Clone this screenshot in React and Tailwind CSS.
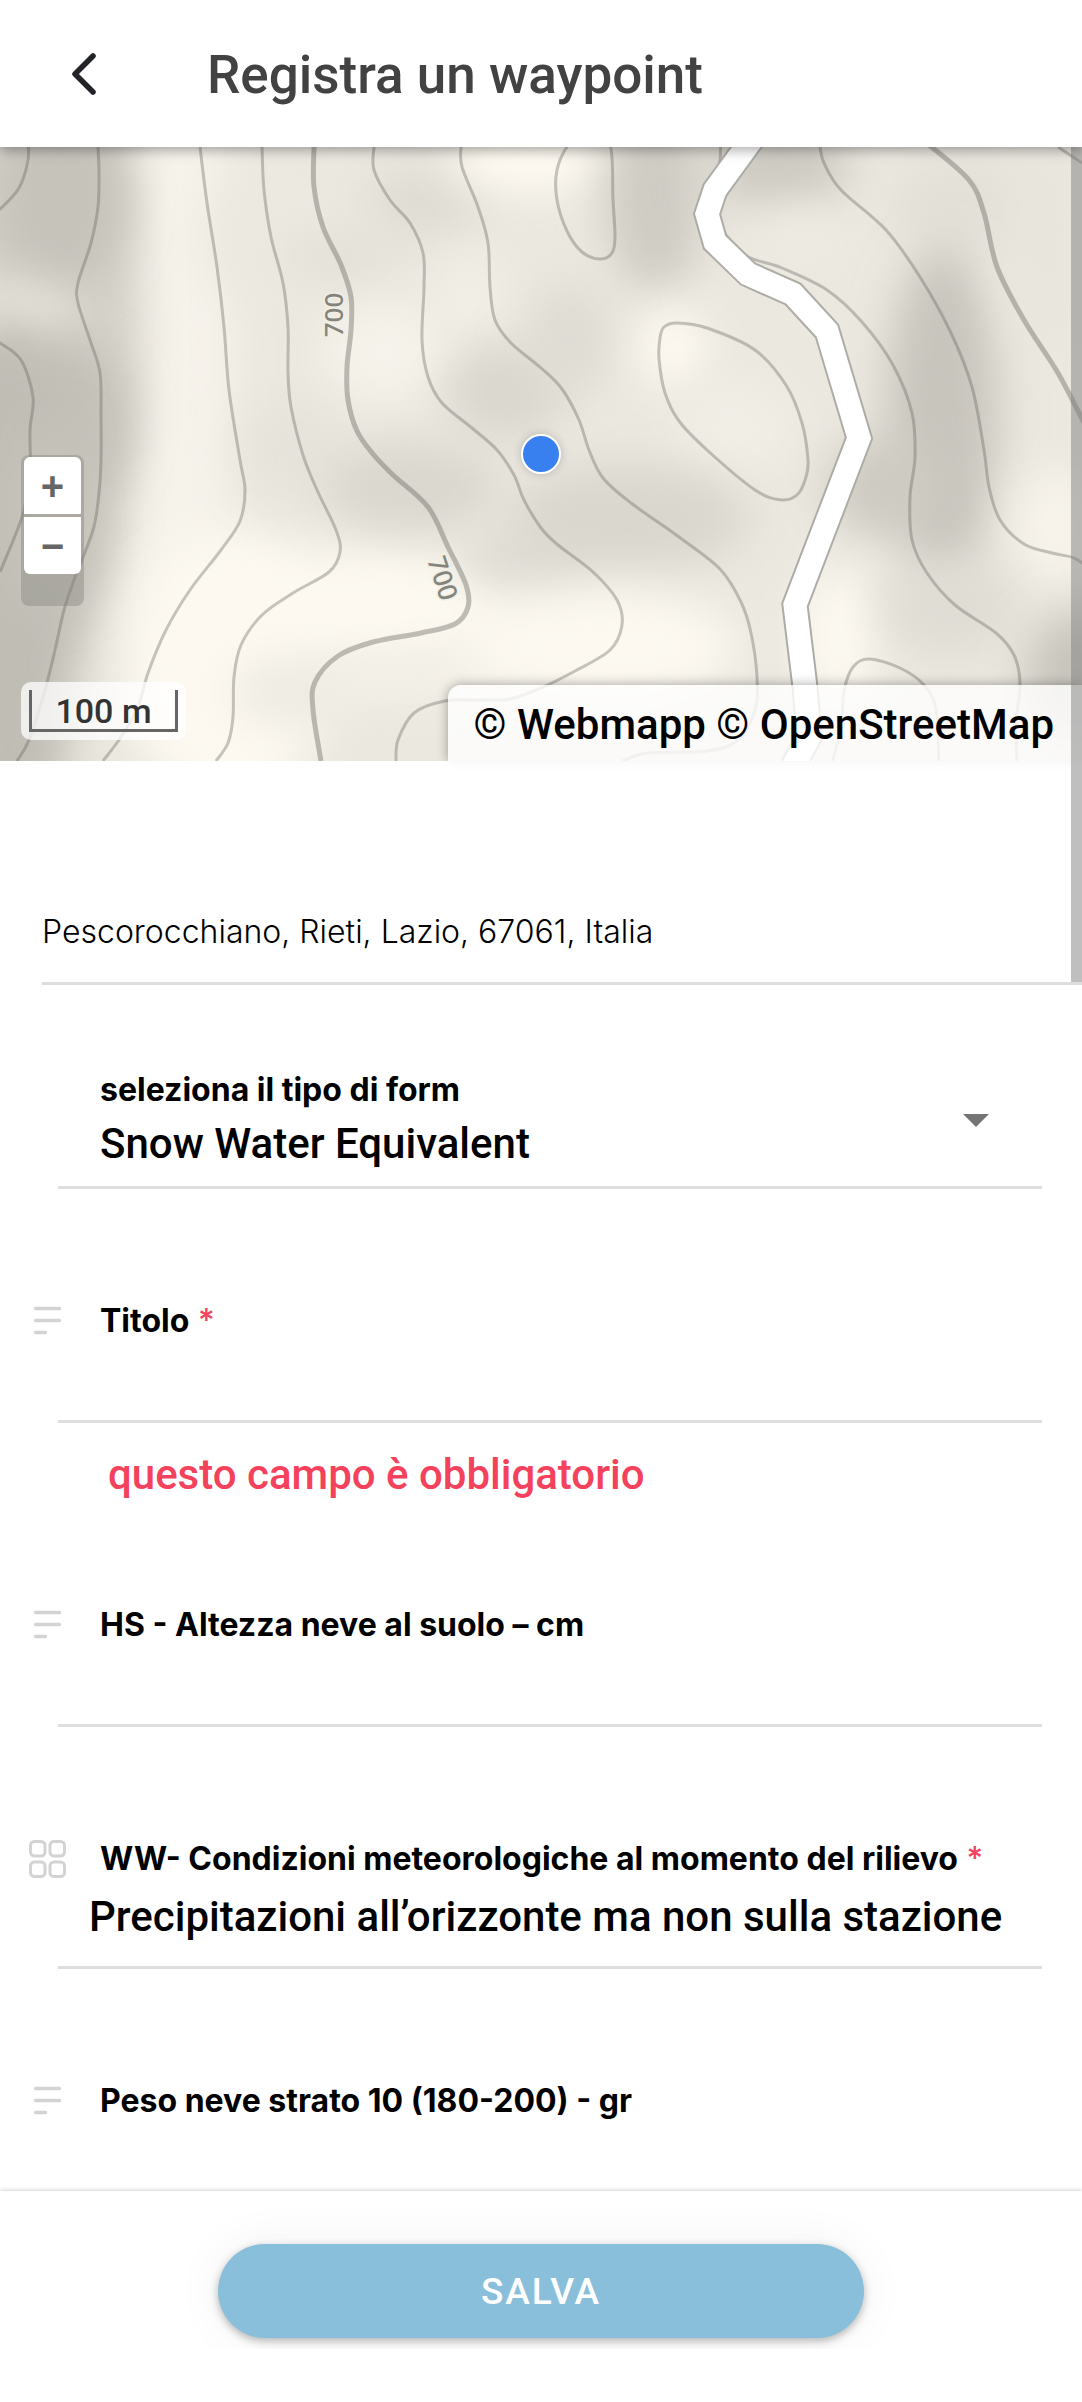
import React from "react";

const smooth = (pts, closed) => {
  const n = pts.length;
  const at = (i) => (closed ? pts[(i + n) % n] : pts[Math.max(0, Math.min(n - 1, i))]);
  let d = `M${pts[0][0]} ${pts[0][1]}`;
  const last = closed ? n : n - 1;
  for (let i = 0; i < last; i++) {
    const [a, b, c, e] = [at(i - 1), at(i), at(i + 1), at(i + 2)];
    d += `C${b[0] + (c[0] - a[0]) / 6} ${b[1] + (c[1] - a[1]) / 6} ${c[0] - (e[0] - b[0]) / 6} ${c[1] - (e[1] - b[1]) / 6} ${c[0]} ${c[1]}`;
  }
  return d;
};

const contours = [
  [[28, -10], [28, 13], [19, 41], [0, 62], [-10, 68]],
  [[98, 0], [99, 26], [98, 60], [91, 96], [78, 136], [78, 156], [90, 193], [100, 226], [101, 270], [101, 313], [99, 346], [93, 383], [74, 433], [64, 463], [55, 503], [45, 543], [29, 593], [17, 614]],
  [[-10, 190], [0, 196], [21, 213], [33, 250], [30, 283], [30, 330], [22, 370], [0, 425]],
  [[200, 0], [207, 56], [217, 120], [224, 180], [229, 243], [240, 313], [245, 343], [240, 374], [221, 403], [190, 443], [166, 483], [148, 526], [138, 560], [121, 590], [103, 614]],
  [[262, 0], [264, 43], [271, 90], [283, 136], [288, 180], [288, 226], [291, 260], [303, 308], [317, 343], [336, 383], [340, 405], [329, 425], [293, 446], [262, 468], [241, 498], [234, 530], [233, 570], [228, 596], [216, 614]],
  [[374, 0], [374, 23], [390, 53], [410, 76], [423, 106], [424, 140], [422, 193], [428, 230], [442, 256], [472, 281], [497, 303], [514, 328], [524, 353], [541, 381], [558, 398], [593, 425], [617, 453], [622, 478], [610, 503], [575, 524], [541, 541], [510, 552], [480, 553], [445, 554], [414, 566], [398, 593], [396, 614]],
  [[461, 0], [462, 20], [478, 60], [488, 96], [490, 140], [495, 173], [511, 196], [541, 221], [562, 242], [579, 273], [589, 303], [603, 331], [631, 356], [679, 390], [720, 422], [741, 455], [751, 486], [757, 530], [755, 563], [738, 593], [707, 604], [648, 606], [622, 614]],
  [[720, -10], [720, 13], [712, 60], [741, 105], [782, 121], [827, 143], [862, 175], [893, 218], [912, 266], [915, 310], [910, 350], [912, 393], [927, 426], [955, 458], [996, 486], [1014, 508], [1020, 536], [1016, 576], [1017, 614]],
  [[820, 0], [824, 16], [841, 43], [886, 83], [920, 130], [951, 186], [972, 240], [984, 303], [989, 340], [1000, 373], [1024, 397], [1052, 406], [1074, 411], [1090, 422]],
  [[1058, 0], [1082, 16]],
  [[831, 620], [841, 580], [844, 544], [853, 520], [869, 512], [900, 521], [924, 538], [936, 563], [939, 620]],
];
const loops = [
  [[569, -3], [557, 23], [557, 53], [567, 84], [582, 105], [600, 112], [612, 106], [615, 90], [613, 53], [610, -3], [590, -20]],
  [[660, 191], [664, 180], [677, 176], [707, 181], [755, 203], [786, 238], [802, 276], [808, 313], [806, 330], [798, 347], [782, 353], [755, 343], [707, 303], [679, 274], [665, 246], [659, 212]],
];
const indexContours = [
  [[314, 0], [314, 40], [323, 80], [341, 118], [351, 150], [351, 183], [347, 220], [348, 253], [357, 284], [373, 307], [393, 328], [428, 360], [448, 400], [466, 438], [468, 460], [455, 477], [421, 486], [373, 495], [338, 509], [315, 535], [313, 563], [321, 614]],
  [[928, -3], [969, 33], [984, 66], [997, 120], [1024, 173], [1058, 226], [1084, 276]],
];

const shades = [
  [175, 200, 60, 420, "#f6f3eb"],
  [50, 180, 90, 330, "#d3d0c8"],
  [60, 50, 66, 90, "#c6c3bb"],
  [10, 168, 66, 30, "#e8e5dd"],
  [62, 275, 66, 84, "#c4c1b9"],
  [8, 450, 70, 280, "#c0bdb5"],
  [50, 370, 50, 90, "#c6c3bb"],
  [230, 520, 100, 140, "#fdf9f1"],
  [360, 460, 150, 60, "#fdf9f1"],
  [270, 90, 70, 70, "#ece9e1"],
  [425, 55, 60, 36, "#dfdcd4"],
  [340, 110, 60, 24, "#e3e0d8"],
  [385, 205, 66, 50, "#f6f3eb"],
  [470, 150, 36, 46, "#f2efe7"],
  [290, 300, 50, 46, "#e6e3db"],
  [505, 245, 60, 48, "#dad7cf"],
  [530, 10, 80, 34, "#fffbf3"],
  [410, 340, 90, 44, "#dad7cf"],
  [530, 410, 70, 36, "#e0ddd5"],
  [300, 545, 70, 36, "#eeebe3"],
  [420, 530, 100, 24, "#f4f1e8"],
  [655, 50, 50, 96, "#cfccc4"],
  [570, 190, 44, 54, "#dfdcd4"],
  [672, 200, 34, 40, "#fffbf3"],
  [735, 280, 60, 50, "#f1eee6"],
  [630, 370, 120, 54, "#dad7cf"],
  [600, 500, 140, 56, "#fdf9f1"],
  [780, 20, 70, 44, "#cdcac2"],
  [800, 90, 50, 30, "#eeebe3"],
  [960, 60, 70, 50, "#e3e0d8"],
  [942, 270, 56, 170, "#c8c5bd"],
  [1046, 90, 36, 110, "#e8e5dd"],
  [885, 340, 60, 50, "#cecbc3"],
  [1055, 380, 40, 60, "#f8f4ec"],
  [838, 490, 40, 70, "#fdf9f1"],
  [950, 460, 70, 50, "#e0ddd5"],
  [1075, 530, 50, 66, "#c8c5bd"],
];

const road = "M755 -12L715 43L707 67L715 95L748 127L793 147L827 184L859 291L795 458L805 540L809 590L790 625";

function TerrainMap() {
  return (
    <svg viewBox="0 0 1082 614" preserveAspectRatio="xMidYMid slice" className="absolute inset-0 h-full w-full" aria-hidden="true">
      <defs>
        <filter id="relief" x="-80%" y="-150%" width="260%" height="400%">
          <feGaussianBlur stdDeviation="22" />
        </filter>
      </defs>
      <rect width="1082" height="614" fill="#ebe8e0" />
      {shades.map(([cx, cy, rx, ry, fill], i) => (
        <ellipse key={i} cx={cx} cy={cy} rx={rx} ry={ry} fill={fill} filter="url(#relief)" />
      ))}
      <g fill="none" stroke="#64645c" strokeOpacity="0.36" strokeWidth="3">
        {contours.map((c, i) => <path key={i} d={smooth(c)} />)}
        {loops.map((c, i) => <path key={i} d={smooth(c, true)} />)}
      </g>
      <g fill="none" stroke="#64645c" strokeOpacity="0.4" strokeWidth="5">
        {indexContours.map((c, i) => <path key={i} d={smooth(c)} />)}
      </g>
      <path d={road} fill="none" stroke="#adaca6" strokeWidth="27" />
      <path d={road} fill="none" stroke="#ffffff" strokeWidth="23" />
      <g fill="#84847d" stroke="#f2efe6" strokeWidth="3" paintOrder="stroke" fontFamily="Noto Sans, sans-serif" fontSize="26" fontWeight="500" textAnchor="middle">
        <text transform="translate(343 168) rotate(-90)">700</text>
        <text transform="translate(434 434) rotate(72)">700</text>
      </g>
    </svg>
  );
}

function TextIcon() {
  return (
    <svg viewBox="0 0 37 40" className="h-10 w-[37px] shrink-0" fill="none" stroke="#d3d3d3" strokeWidth="3.4" strokeLinecap="round" aria-hidden="true">
      <path d="M6.500 7.500H30.500M6.500 19.500H30.500M6.500 31.500H16.500" />
    </svg>
  );
}

function GridIcon() {
  return (
    <svg viewBox="0 0 37 40" className="h-10 w-[37px] shrink-0" fill="none" stroke="#d3d3d3" strokeWidth="3" aria-hidden="true">
      <rect x="1.500" y="2.500" width="14.500" height="14.500" rx="4" />
      <rect x="21" y="2.500" width="14.500" height="14.500" rx="4" />
      <rect x="1.500" y="23" width="14.500" height="14.500" rx="4" />
      <rect x="21" y="23" width="14.500" height="14.500" rx="4" />
    </svg>
  );
}

function FieldLabel({ icon, id, required, children }) {
  return (
    <div className="flex items-center gap-[34px] pl-[29px]">
      {icon}
      <label htmlFor={id} className="font-[Inter,sans-serif] text-[32px] leading-[44px] font-bold whitespace-nowrap">
        {children}
        {required && <span className="font-medium text-[#f4425c]"> *</span>}
      </label>
    </div>
  );
}

const inputClass =
  "block h-20 w-full border-b-[3px] border-[#dedede] bg-transparent pl-[42px] text-[42px] font-medium outline-none";

export default function App() {
  return (
    <div className="flex h-screen flex-col overflow-hidden bg-white font-[Roboto,sans-serif] text-black">
      <header className="z-10 flex h-[147px] shrink-0 items-center bg-white pt-[2px] pl-[62px] shadow-[0_3px_12px_rgba(0,0,0,0.35)]">
        <button type="button" aria-label="Indietro" className="mr-[97px] flex h-12 w-12 items-center">
          <svg viewBox="0 0 48 48" className="h-12 w-12" fill="none" stroke="#222428" strokeWidth="5.500" strokeLinecap="round" strokeLinejoin="round" aria-hidden="true">
            <path d="M31 5L13 23L31 41" />
          </svg>
        </button>
        <h1 className="text-[53px] leading-[64px] font-medium text-[#424242]">Registra un waypoint</h1>
      </header>

      <main className="relative min-h-0 flex-1 overflow-hidden">
        <section aria-label="Mappa" className="relative h-[614px]">
          <TerrainMap />
          <div className="absolute top-1/2 left-1/2 h-10 w-10 -translate-1/2 rounded-full border-2 border-white bg-[#3880f0] shadow-[0_0_10px_rgba(0,0,0,0.2)]" />
          <div className="absolute top-[308px] left-[21px] flex h-[151px] w-[63px] flex-col gap-[3px] rounded-lg bg-[#82827a]/40 px-[3px] py-[2px]">
            <button type="button" aria-label="Zoom in" className="h-[57px] rounded-t-md bg-white font-[Liberation_Sans,sans-serif] text-[40px] leading-[56px] font-bold text-[#666]">+</button>
            <button type="button" aria-label="Zoom out" className="h-[57px] rounded-b-md bg-white font-[Liberation_Sans,sans-serif] text-[40px] leading-[56px] font-bold text-[#666]">−</button>
          </div>
          <div className="absolute bottom-[21px] left-[21px] rounded-[10px] bg-white/75 p-2">
            <div className="h-[42px] w-[149px] border-3 border-t-0 border-[#666] text-center text-[34px] leading-[42px] font-medium text-[#333]">100 m</div>
          </div>
          <div className="absolute right-0 bottom-0 rounded-tl-[13px] bg-white/80 pt-[12px] pr-7 pb-[8px] pl-[26px] text-[42px] leading-14 font-medium shadow-[0_0_12px_rgba(0,0,0,0.35)]">
            © <a href="#webmapp">Webmapp</a> © <a href="#osm">OpenStreetMap</a>
          </div>
          <div className="absolute inset-x-0 top-full h-4 bg-white/85" />
        </section>

        <p className="ml-[42px] border-b-[3px] border-[#dedede] pt-[151px] pb-[30px] font-[Inter,sans-serif] text-[32px] leading-10 font-light">
          Pescorocchiano, Rieti, Lazio, 67061, Italia
        </p>

        <form>
          <div className="mt-[83px] mr-10 ml-[58px] flex items-center border-b-[3px] border-[#dedede] pr-[53px] pb-[14px] pl-[42px]">
            <div className="flex flex-1 flex-col">
              <label htmlFor="form-type" className="font-[Inter,sans-serif] text-[32px] leading-[44px] font-bold">seleziona il tipo di form</label>
              <select id="form-type" className="h-[60px] w-full appearance-none bg-transparent text-[42px] font-medium outline-none">
                <option>Snow Water Equivalent</option>
              </select>
            </div>
            <svg viewBox="0 0 26 13" className="h-[13px] w-[26px]" aria-hidden="true">
              <path d="M0 0H26L13 13Z" fill="#757575" />
            </svg>
          </div>

          <div className="mt-[110px]">
            <FieldLabel icon={<TextIcon />} id="title" required>Titolo</FieldLabel>
            <div className="mr-10 ml-[58px]">
              <input id="title" type="text" className={inputClass} />
              <p className="mt-6 pl-[50px] text-[42px] leading-14 font-medium text-[#f4425c]">questo campo è obbligatorio</p>
            </div>
          </div>

          <div className="mt-[100px]">
            <FieldLabel icon={<TextIcon />} id="hs">HS - Altezza neve al suolo – cm</FieldLabel>
            <div className="mr-10 ml-[58px]">
              <input id="hs" type="text" className={inputClass} />
            </div>
          </div>

          <div className="mt-[110px]">
            <FieldLabel icon={<GridIcon />} id="ww" required>WW- Condizioni meteorologiche al momento del rilievo</FieldLabel>
            <div className="mr-10 ml-[58px] border-b-[3px] border-[#dedede] pb-[14px] pl-[31px]">
              <select id="ww" className="block h-[71px] w-full appearance-none bg-transparent text-[42px] font-medium outline-none">
                <option>Precipitazioni all’orizzonte ma non sulla stazione</option>
              </select>
            </div>
          </div>

          <div className="mt-[110px]">
            <FieldLabel icon={<TextIcon />} id="weight">Peso neve strato 10 (180-200) - gr</FieldLabel>
            <div className="mr-10 ml-[58px]">
              <input id="weight" type="text" className={inputClass} />
            </div>
          </div>
        </form>

        <div className="absolute top-0 right-0 h-[835px] w-[11px] bg-[#808080]/50" />
      </main>

      <footer className="relative h-[211px] shrink-0 bg-white shadow-[0_-1px_4px_rgba(0,0,0,0.18)]">
        <div className="flex h-[158px] overflow-hidden px-[218px] pt-[53px]">
          <button type="button" className="h-[94px] flex-1 rounded-full bg-[#89bfdb] pt-[2px] text-[37px] font-medium tracking-wider text-white shadow-[0_3px_8px_rgba(0,0,0,0.28),0_0_50px_rgba(0,0,0,0.06)]">SALVA</button>
        </div>
      </footer>
    </div>
  );
}
